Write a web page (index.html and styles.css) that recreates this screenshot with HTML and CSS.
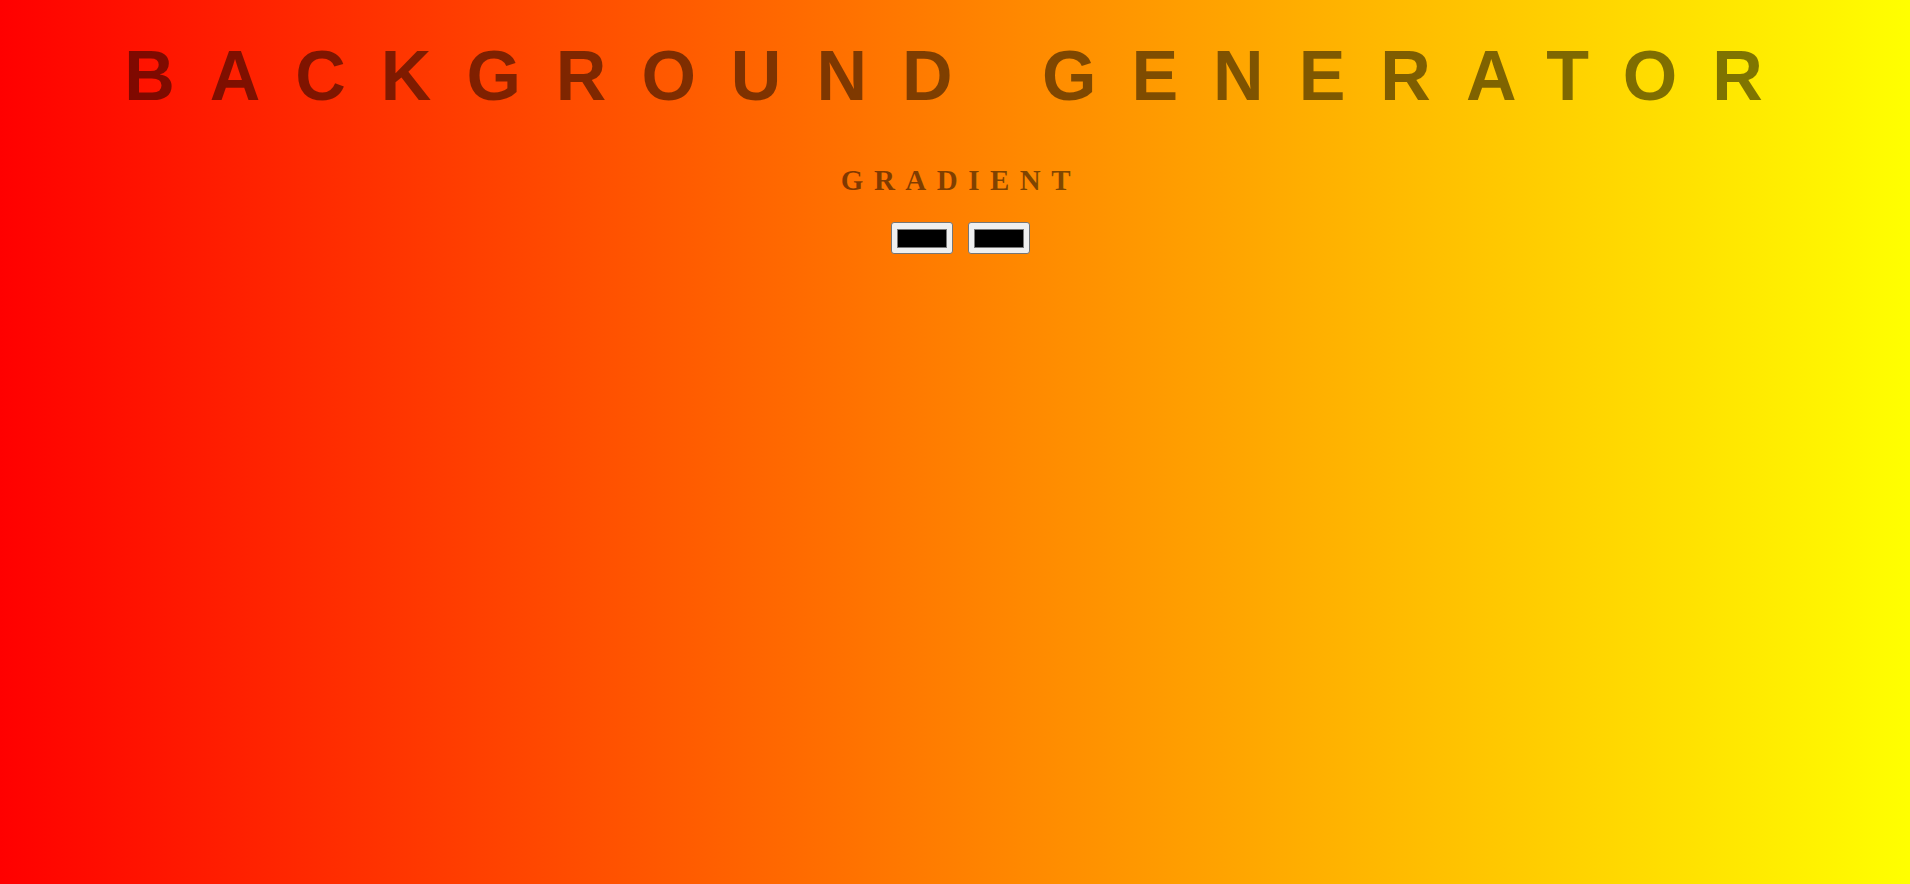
FILE: index.html
```html
<!DOCTYPE html>
<html lang="en">
<head>
<meta charset="utf-8">
<title>Background Generator</title>
<link rel="stylesheet" href="styles.css">
</head>
<body class="page">
  <h1 class="title">Background Generator</h1>
  <h3 class="subtitle">Gradient</h3>
  <div class="pickers">
    <input class="color-input" type="color" name="color1" value="#000000">
    <input class="color-input" type="color" name="color2" value="#000000">
  </div>
</body>
</html>
```

FILE: styles.css
```css
html {
  height: 100%;
}

.page {
  margin: 0;
  padding: 36px 0 0 12px;
  min-height: 100%;
  box-sizing: border-box;
  background: linear-gradient(to right, #ff0000, #ffff00);
  color: rgba(0, 0, 0, 0.5);
  font-family: "Liberation Serif", serif;
  font-size: 20px;
  text-align: center;
  text-transform: uppercase;
  letter-spacing: 10px;
}

.title {
  margin: 0;
  font-family: "Liberation Sans", Arial, sans-serif;
  font-weight: 700;
  font-size: 70px;
  line-height: 80px;
  letter-spacing: 35px;
  color: rgba(0, 0, 0, 0.5);
}

.subtitle {
  margin: 48px 0 0;
  font-family: "Liberation Serif", "Times New Roman", serif;
  font-weight: 700;
  font-size: 29px;
  line-height: 32px;
  letter-spacing: 10.5px;
  color: rgba(0, 0, 0, 0.5);
}

.pickers {
  display: flex;
  justify-content: center;
  gap: 15px;
  margin-top: 26px;
  padding-right: 2px;
}

.color-input {
  -webkit-appearance: none;
  appearance: none;
  box-sizing: border-box;
  width: 62px;
  height: 32px;
  margin: 0;
  padding: 1px 3px;
  background: #efefef;
  border: 1px solid #767676;
  border-radius: 3px;
  cursor: pointer;
}

.color-input::-webkit-color-swatch-wrapper {
  padding: 5px 2px 4px;
}

.color-input::-webkit-color-swatch {
  border: 1px solid #777777;
  border-radius: 0;
}
```
